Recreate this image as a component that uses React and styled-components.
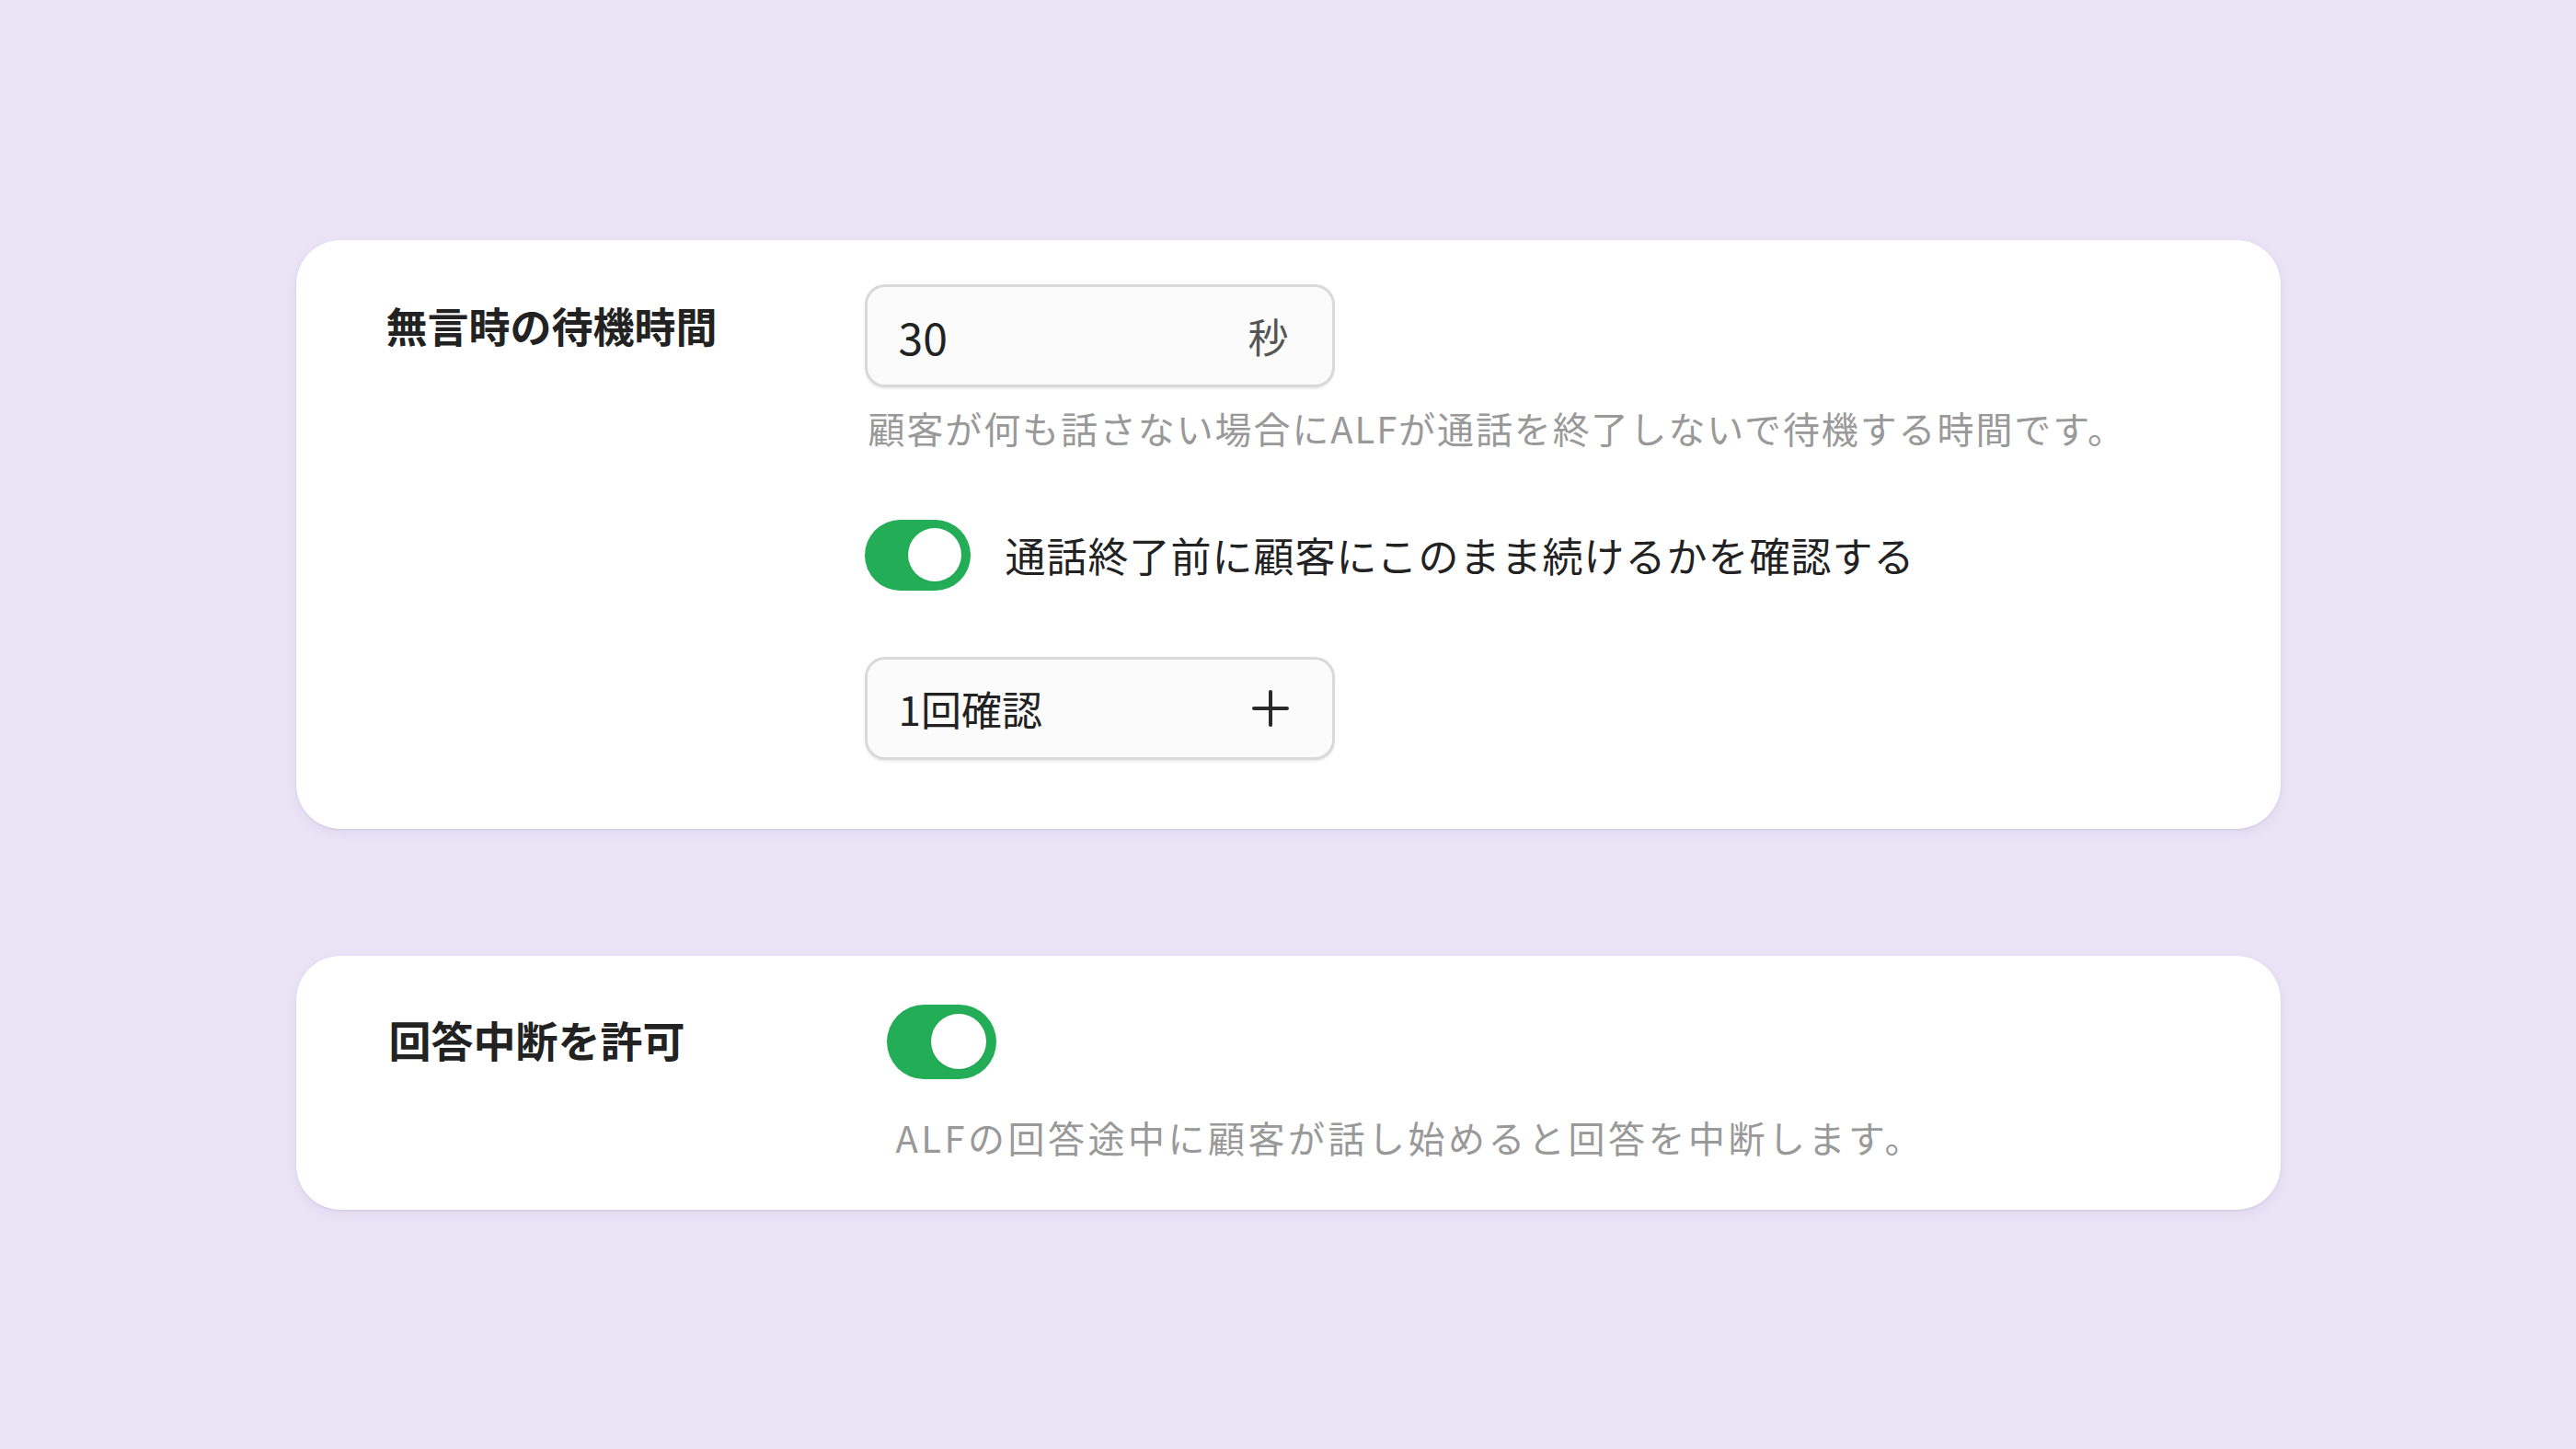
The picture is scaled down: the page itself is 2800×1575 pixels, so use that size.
import React from "react";
import styled, { createGlobalStyle } from "styled-components";

const GlobalStyle = createGlobalStyle`
  html, body {
    margin: 0;
    padding: 0;
    background: #ebe4f6;
  }
  body {
    font-family: "Noto Sans CJK JP", "Noto Sans", sans-serif;
    color: #222;
  }
  * { box-sizing: border-box; }
`;

const Page = styled.main`
  min-height: 100vh;
  display: flex;
  flex-direction: column;
  align-items: center;
  justify-content: center;
  gap: 138px;
`;

const Card = styled.section`
  width: 2157px;
  display: flex;
  align-items: flex-start;
  padding: ${(p) => p.$pt}px 98px ${(p) => p.$pb}px;
  background: #fff;
  border-radius: 48px;
  box-shadow: 0 1px 2px rgba(90, 70, 150, 0.14), 0 4px 14px rgba(90, 70, 150, 0.08);
`;

const Label = styled.h3`
  flex: 0 0 ${(p) => p.$width}px;
  margin: ${(p) => p.$mt}px 0 0;
  padding-left: ${(p) => p.$pl || 0}px;
  font-size: ${(p) => p.$size}px;
  line-height: 1.5;
  font-weight: 700;
  color: #222;
`;

const Controls = styled.div`
  display: flex;
  flex-direction: column;
  align-items: flex-start;
`;

const Field = styled.div`
  width: 511px;
  height: 112px;
  display: flex;
  align-items: center;
  justify-content: space-between;
  padding: 0 ${(p) => p.$pr}px 0 34px;
  background: #fbfbfb;
  border: 3px solid #d9d9d9;
  border-radius: 22px;
  box-shadow: 0 2px 2px rgba(0, 0, 0, 0.08);
  margin-top: ${(p) => p.$mt || 0}px;
`;

const Value = styled.span`
  font-size: ${(p) => p.$size}px;
  line-height: 1;
  color: #222;
`;

const Unit = styled.span`
  font-size: 44px;
  line-height: 1;
  color: #555;
`;

const Help = styled.p`
  margin: ${(p) => p.$mt}px 0 0 ${(p) => p.$ml || 0}px;
  font-size: 40px;
  line-height: 60px;
  color: #999;
  letter-spacing: ${(p) => p.$ls || 0}px;
  white-space: nowrap;
`;

const ToggleRow = styled.div`
  display: flex;
  align-items: center;
  gap: 38px;
  margin-top: ${(p) => p.$mt}px;
`;

const Track = styled.span`
  width: ${(p) => p.$w}px;
  height: ${(p) => p.$h}px;
  flex: none;
  display: flex;
  align-items: center;
  justify-content: flex-end;
  padding: 0 ${(p) => (p.$h - p.$knob) / 2}px;
  background: #22ad56;
  border-radius: 999px;
`;

const Knob = styled.span`
  width: ${(p) => p.$size}px;
  height: ${(p) => p.$size}px;
  border-radius: 50%;
  background: #fff;
  box-shadow: 0 1px 2px rgba(0, 0, 0, 0.08);
`;

const ToggleText = styled.span`
  font-size: 44px;
  line-height: 1.5;
  letter-spacing: 1px;
  color: #222;
  white-space: nowrap;
`;

const Toggle = ({ w, h, knob }) => (
  <Track $w={w} $h={h} $knob={knob} role="switch" aria-checked="true">
    <Knob $size={knob} />
  </Track>
);

const PlusIcon = () => (
  <svg width="40" height="40" viewBox="0 0 40 40" fill="none">
    <path d="M20 2v36M2 20h36" stroke="#2a2a2a" strokeWidth="4" strokeLinecap="round" />
  </svg>
);

export default function App() {
  return (
    <>
      <GlobalStyle />
      <Page>
        <Card $pt={48} $pb={75}>
          <Label $width={520} $mt={11} $size={45}>無言時の待機時間</Label>
          <Controls>
            <Field $pr={47}>
              <Value $size={48}>30</Value>
              <Unit>秒</Unit>
            </Field>
            <Help $mt={14} $ml={4} $ls={1.9}>顧客が何も話さない場合にALFが通話を終了しないで待機する時間です。</Help>
            <ToggleRow $mt={70}>
              <Toggle w={115} h={77} knob={58} />
              <ToggleText>通話終了前に顧客にこのまま続けるかを確認する</ToggleText>
            </ToggleRow>
            <Field $pr={47} $mt={72}>
              <Value $size={44}>1回確認</Value>
              <PlusIcon />
            </Field>
          </Controls>
        </Card>
        <Card $pt={53} $pb={49}>
          <Label $width={544} $mt={3} $size={46} $pl={3}>回答中断を許可</Label>
          <Controls>
            <Toggle w={119} h={81} knob={60} />
            <Help $mt={33} $ml={10} $ls={3.5}>ALFの回答途中に顧客が話し始めると回答を中断します。</Help>
          </Controls>
        </Card>
      </Page>
    </>
  );
}
